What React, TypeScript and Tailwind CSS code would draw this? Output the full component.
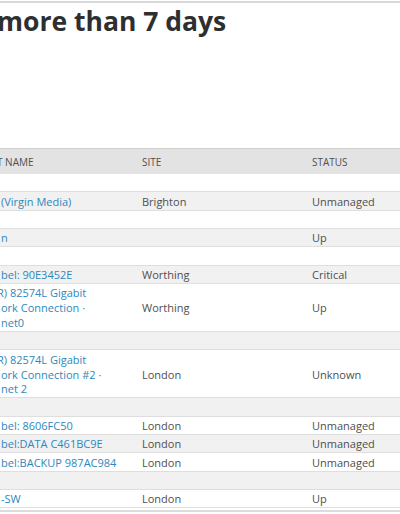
type Row = {
  name?: React.ReactNode;
  site?: string;
  status?: string;
};

const rows: Row[] = [
  {},
  { name: "(Virgin Media)", site: "Brighton", status: "Unmanaged" },
  {},
  { name: "n", status: "Up" },
  {},
  { name: "bel: 90E3452E", site: "Worthing", status: "Critical" },
  {
    name: (
      <>
        <span className="inline-block -ml-[4px]">R) 82574L Gigabit</span>
        <br />
        ork Connection ·
        <br />
        net0
      </>
    ),
    site: "Worthing",
    status: "Up",
  },
  {},
  {
    name: (
      <>
        <span className="inline-block -ml-[4px]">R) 82574L Gigabit</span>
        <br />
        ork Connection #2 ·
        <br />
        net 2
      </>
    ),
    site: "London",
    status: "Unknown",
  },
  {},
  { name: "bel: 8606FC50", site: "London", status: "Unmanaged" },
  { name: "bel:DATA C461BC9E", site: "London", status: "Unmanaged" },
  { name: "bel:BACKUP 987AC984", site: "London", status: "Unmanaged" },
  {},
  { name: "-SW", site: "London", status: "Up" },
];

export default function App() {
  return (
    <div className="w-[400px] h-[514px] overflow-hidden bg-white font-['Open_Sans',sans-serif]">
      {/* page title, cropped on the left */}
      <div className="mt-px border-t-2 border-[#d9d9d9] h-[147px]">
        <h1 className="-ml-[3px] text-[26.5px] leading-[37px] font-bold text-[#2f2f2f] whitespace-nowrap">
          more than 7 days
        </h1>
      </div>

      {/* table */}
      <div className="text-[11px] text-[#4f4f4f]">
        <div className="grid grid-cols-[142px_170px_1fr] h-[26px] pt-[2px] items-center bg-[#e3e3e3] border-t border-[#cfcfcf] text-[10px] uppercase text-[#505050]">
          <div className="whitespace-nowrap">
            <span className="inline-block -ml-[3px]">T NAME</span>
          </div>
          <div>Site</div>
          <div>Status</div>
        </div>

        {rows.map((r, i) => (
          <div
            key={i}
            className={`grid grid-cols-[142px_170px_1fr] items-center leading-[14.83px] pt-[2.5px] pb-0 border-b border-[#dedede] ${
              i % 2 === 1 ? "bg-[#f1f1f1]" : "bg-white"
            }`}
          >
            <div className="text-[#2f87bd] whitespace-nowrap min-h-[14.83px] pl-px">{r.name}</div>
            <div>{r.site}</div>
            <div>{r.status}</div>
          </div>
        ))}

        <div className="mt-[2px] border-t-2 border-[#dcdcdc]" />
      </div>
    </div>
  );
}
